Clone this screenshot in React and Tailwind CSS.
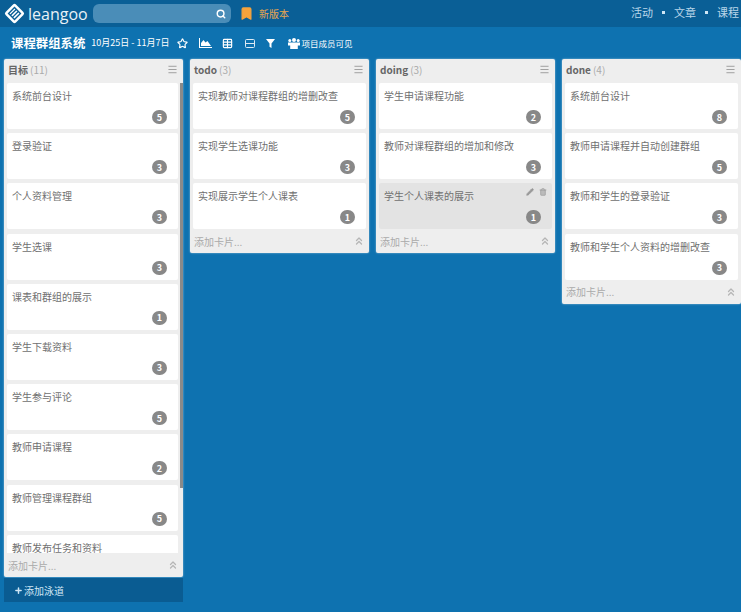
import { Search, Bookmark, Star, Table, Menu, Pencil, Trash2, ChevronsUp, Plus } from "lucide-react";

const font = { fontFamily: '"Noto Sans CJK SC", sans-serif' };

const lanes = [
  {
    name: "目标",
    count: 11,
    cards: [
      ["系统前台设计", 5],
      ["登录验证", 3],
      ["个人资料管理", 3],
      ["学生选课", 3],
      ["课表和群组的展示", 1],
      ["学生下载资料", 3],
      ["学生参与评论", 5],
      ["教师申请课程", 2],
      ["教师管理课程群组", 5],
      ["教师发布任务和资料", 3],
    ],
  },
  {
    name: "todo",
    count: 3,
    cards: [
      ["实现教师对课程群组的增删改查", 5],
      ["实现学生选课功能", 3],
      ["实现展示学生个人课表", 1],
    ],
  },
  {
    name: "doing",
    count: 3,
    cards: [
      ["学生申请课程功能", 2],
      ["教师对课程群组的增加和修改", 3],
      ["学生个人课表的展示", 1, true],
    ],
  },
  {
    name: "done",
    count: 4,
    cards: [
      ["系统前台设计", 8],
      ["教师申请课程并自动创建群组", 5],
      ["教师和学生的登录验证", 3],
      ["教师和学生个人资料的增删改查", 3],
    ],
  },
];

function Card({ title, badge, hover }) {
  return (
    <div className={`relative h-[46px] shrink-0 rounded-[2px] pl-[5px] pt-[6px] text-[10px] leading-[13px] text-[#707070] ${hover ? "bg-[#e3e3e3]" : "bg-white"}`}>
      {title}
      {hover && (
        <div className="absolute right-[5px] top-[5px] flex items-center gap-[5px] text-[#999]">
          <Pencil size={8} fill="#999" />
          <Trash2 size={8} fill="#bbb" />
        </div>
      )}
      <span className="absolute bottom-[5px] right-[11px] flex h-[14px] w-[15px] items-center justify-center rounded-full bg-[#888888] text-[9px] font-bold text-white">
        {badge}
      </span>
    </div>
  );
}

function Lane({ lane, scroll }) {
  return (
    <div className="w-[179px] shrink-0">
      <div className="rounded-[2px] bg-[#eeeeee] shadow-[0_0_2px_rgba(255,255,255,0.6)]">
        <div className="flex h-[24px] items-center justify-between pb-[3px] pl-[4px] pr-[5px] text-[10px]">
          <div>
            <span className="font-bold text-[#666]">{lane.name}</span>
            <span className="ml-[2px] text-[#aaa]">({lane.count})</span>
          </div>
          <Menu size={11} className="text-[#999]" />
        </div>
        <div className={`relative flex flex-col gap-[4.2px] overflow-hidden px-[3px] ${scroll ? "h-[470px] pr-[5px]" : ""}`}>
          {lane.cards.map((c) => (
            <Card key={c[0]} title={c[0]} badge={c[1]} hover={c[2]} />
          ))}
          {scroll && <div className="absolute right-0 top-0 h-[405px] w-[3px] bg-[#8a8a8a]" />}
        </div>
        <div className="flex h-[24px] items-center justify-between pl-[4px] pr-[4px] text-[10px] text-[#aaa]">
          <span>添加卡片...</span>
          <ChevronsUp size={12} strokeWidth={2.5} className="text-[#b5b5b5]" />
        </div>
      </div>
      {scroll && (
        <div className="mt-[1px] flex h-[24px] items-center bg-[#0a5c92] pl-[10px] text-[10px] text-[#cfe6f5]">
          <Plus size={9} strokeWidth={4} className="mr-[1px]" />
          添加泳道
        </div>
      )}
    </div>
  );
}

export default function App() {
  return (
    <div style={font} className="flex h-[612px] w-[741px] flex-col overflow-hidden bg-[#0e72b0]">
      <header className="flex h-[27px] shrink-0 items-center justify-between bg-[#0a5f96] pl-[4px] text-white">
        <div className="flex items-center">
          <svg width="21" height="21" viewBox="0 0 20 20">
            <rect x="3" y="3" width="14" height="14" rx="2" fill="#fff" transform="rotate(45 10 10)" />
            <g stroke="#0a5f96" strokeWidth="1.3" transform="rotate(45 10 10)">
              <rect x="6" y="6" width="8" height="8" fill="none" />
              <path d="M8.5 6v8M11.2 6v8" />
            </g>
          </svg>
          <span style={{ fontFamily: '"Open Sans", sans-serif' }} className="ml-[3px] w-[60px] text-[16px] leading-none text-[#e8f1f7]">
            leangoo
          </span>
          <div className="ml-[5px] flex h-[19px] w-[138px] items-center justify-end rounded-[6px] bg-[#4a8db8] pr-[5px]">
            <Search size={10} strokeWidth={3.5} />
          </div>
          <Bookmark size={15} fill="#f5a33c" stroke="#f5a33c" className="ml-[8px]" />
          <span className="ml-[5px] text-[10px] text-[#e9a64f]">新版本</span>
        </div>
        <nav className="mb-[3px] flex items-center whitespace-nowrap text-[11px] text-[#b9d6e9]">
          <span>活动</span>
          <span className="mx-[9px] h-[3px] w-[3px] bg-[#cfe6f5]" />
          <span>文章</span>
          <span className="mx-[9px] h-[3px] w-[3px] bg-[#cfe6f5]" />
          <span className="w-[24px] overflow-hidden">课程</span>
        </nav>
      </header>
      <div className="flex h-[32px] shrink-0 items-center pl-[11px] text-white">
        <h1 className="text-[12.4px] font-bold">课程群组系统</h1>
        <span className="ml-[6px] text-[9px]">10月25日 - 11月7日</span>
        <Star size={11} strokeWidth={2.5} className="ml-[8px]" />
        <svg width="13" height="10" viewBox="0 0 13 10" fill="#fff" className="ml-[11px]">
          <path d="M0 0h1v9h12v1H0z" />
          <path d="M2 8V5l2.5-3 2 2.5L8.5 3l3.5 5z" />
        </svg>
        <Table size={11} strokeWidth={2.5} className="ml-[10px]" />
        <svg width="10" height="9" viewBox="0 0 10 9" fill="none" stroke="#dceaf4" className="ml-[12px]">
          <rect x="0.5" y="0.5" width="9" height="8" rx="1" />
          <path d="M0.5 4.500h9" />
        </svg>
        <svg width="9" height="9" viewBox="0 0 9 9" fill="#fff" className="ml-[11px]">
          <path d="M0 0h9L5.500 4.500V9l-2-1.200V4.500z" />
        </svg>
        <svg width="12" height="11" viewBox="0 0 12 11" fill="#fff" className="ml-[13px]">
          <circle cx="6" cy="2" r="2" />
          <circle cx="1.800" cy="2.500" r="1.500" />
          <circle cx="10.200" cy="2.500" r="1.500" />
          <path d="M0 4.500h12v3H9.800V11H2.200V7.500H0z" />
        </svg>
        <span className="ml-[1px] text-[8.5px]">项目成员可见</span>
      </div>
      <main className="flex items-start gap-[7px] pl-[4px]">
        {lanes.map((lane, i) => (
          <Lane key={lane.name} lane={lane} scroll={i === 0} />
        ))}
      </main>
    </div>
  );
}
